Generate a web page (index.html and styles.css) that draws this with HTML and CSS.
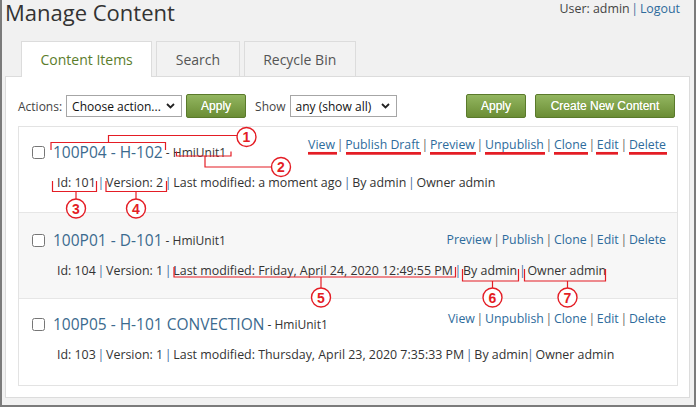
FILE: index.html
```html
<!DOCTYPE html>
<html>
<head>
<meta charset="utf-8">
<title>Manage Content</title>
<link rel="stylesheet" href="styles.css">
</head>
<body>
<header class="top">
  <h1 class="page-title">Manage Content</h1>
  <div class="user">User: admin <span class="bar">|</span> <a href="#" class="link">Logout</a></div>
</header>
<main class="main">
  <nav class="tabs">
    <a class="tab tab-active">Content Items</a>
    <a class="tab">Search</a>
    <a class="tab">Recycle Bin</a>
  </nav>
  <section class="panel">
    <div class="toolbar">
      <div class="toolbar-group">
        <span class="label">Actions:</span>
        <div class="select select-actions"><span>Choose action...</span><svg class="chev" width="9" height="6" viewBox="0 0 9 6"><path d="M1 1 L4.5 4.5 L8 1" fill="none" stroke="#222" stroke-width="1.8"/></svg></div>
        <button class="btn btn-apply">Apply</button>
        <span class="label label-show">Show</span>
        <div class="select select-show"><span>any (show all)</span><svg class="chev" width="9" height="6" viewBox="0 0 9 6"><path d="M1 1 L4.5 4.5 L8 1" fill="none" stroke="#222" stroke-width="1.8"/></svg></div>
      </div>
      <div class="toolbar-group toolbar-right">
        <button class="btn btn-apply">Apply</button>
        <button class="btn btn-create">Create New Content</button>
      </div>
    </div>
    <ul class="items">
      <li class="item">
        <div class="item-head">
          <input type="checkbox" class="check">
          <span class="title">100P04 - H-102</span><span class="unit"> - HmiUnit1</span>
          <div class="actions actions-up-lg">
            <a class="link">View</a> <span class="sep">|</span> <a class="link">Publish Draft</a> <span class="sep">|</span> <a class="link">Preview</a> <span class="sep">|</span> <a class="link">Unpublish</a> <span class="sep">|</span> <a class="link">Clone</a> <span class="sep">|</span> <a class="link">Edit</a> <span class="sep">|</span> <a class="link">Delete</a>
          </div>
        </div>
        <div class="meta">Id: 101 <span class="bar">|</span> Version: 2 <span class="bar">|</span> Last modified: a moment ago <span class="bar">|</span> By admin <span class="bar">|</span> Owner admin</div>
      </li>
      <li class="item item-alt">
        <div class="item-head">
          <input type="checkbox" class="check">
          <span class="title">100P01 - D-101</span><span class="unit"> - HmiUnit1</span>
          <div class="actions">
            <a class="link">Preview</a> <span class="sep">|</span> <a class="link">Publish</a> <span class="sep">|</span> <a class="link">Clone</a> <span class="sep">|</span> <a class="link">Edit</a> <span class="sep">|</span> <a class="link">Delete</a>
          </div>
        </div>
        <div class="meta">Id: 104 <span class="bar">|</span> Version: 1 <span class="bar">|</span> Last modified: Friday, April 24, 2020 12:49:55 PM <span class="bar">|</span> By admin <span class="bar">|</span> Owner admin</div>
      </li>
      <li class="item">
        <div class="item-head">
          <input type="checkbox" class="check">
          <span class="title">100P05 - H-101 CONVECTION</span><span class="unit"> - HmiUnit1</span>
          <div class="actions actions-up-sm">
            <a class="link">View</a> <span class="sep">|</span> <a class="link">Unpublish</a> <span class="sep">|</span> <a class="link">Clone</a> <span class="sep">|</span> <a class="link">Edit</a> <span class="sep">|</span> <a class="link">Delete</a>
          </div>
        </div>
        <div class="meta">Id: 103 <span class="bar">|</span> Version: 1 <span class="bar">|</span> Last modified: Thursday, April 23, 2020 7:35:33 PM <span class="bar">|</span> By admin<span class="bar">|</span> Owner admin</div>
      </li>
    </ul>
  </section>
</main>

<svg class="annotations" width="696" height="407" viewBox="0 0 696 407">
  <g fill="none" stroke="#e41d25" stroke-width="1.2">
    <polyline points="51,150 51,142.5 165.5,142.5 165.5,150"/>
    <polyline points="108.5,142.5 108.5,135.5 237,135.5"/>
    <polyline points="176.5,151.5 176.5,156 231,156 231,151.5"/>
    <polyline points="205,156 205,167 271.5,167"/>
    <polyline points="52.5,181 52.5,191.5 96.5,191.5 96.5,181"/>
    <line x1="76" y1="191.5" x2="76" y2="199"/>
    <polyline points="106,181 106,191.5 166.5,191.5 166.5,181"/>
    <line x1="136" y1="191.5" x2="136" y2="199"/>
    <polyline points="174,267 174,277 455.5,277 455.5,267"/>
    <line x1="321" y1="277" x2="321" y2="288"/>
    <polyline points="462.5,269 462.5,281 518.5,281 518.5,269"/>
    <line x1="492.5" y1="281" x2="492.5" y2="288"/>
    <polyline points="524.5,269 524.5,281 605.5,281 605.5,269"/>
    <line x1="567.5" y1="281" x2="567.5" y2="288"/>
  </g>
  <g stroke="#e41d25" stroke-width="2.7">
    <line x1="308" y1="153.3" x2="337" y2="153.3"/>
    <line x1="346" y1="153.3" x2="421" y2="153.3"/>
    <line x1="430" y1="153.3" x2="476" y2="153.3"/>
    <line x1="485" y1="153.3" x2="545" y2="153.3"/>
    <line x1="554" y1="153.3" x2="588" y2="153.3"/>
    <line x1="596" y1="153.3" x2="618" y2="153.3"/>
    <line x1="629" y1="153.3" x2="667" y2="153.3"/>
  </g>
  <g fill="#fff" stroke="#e41d25" stroke-width="1.4">
    <circle cx="246.5" cy="137" r="9.5"/>
    <circle cx="281" cy="167" r="9.5"/>
    <circle cx="76" cy="208.5" r="9.5"/>
    <circle cx="136" cy="208.5" r="9.5"/>
    <circle cx="321" cy="297.5" r="9.5"/>
    <circle cx="492.5" cy="297.5" r="9.5"/>
    <circle cx="567.5" cy="297.5" r="9.5"/>
  </g>
  <g class="anno-num" fill="#e41d25" text-anchor="middle">
    <text x="246.5" y="142">1</text>
    <text x="281" y="172">2</text>
    <text x="76" y="213.5">3</text>
    <text x="136" y="213.5">4</text>
    <text x="321" y="302.5">5</text>
    <text x="492.5" y="302.5">6</text>
    <text x="567.5" y="302.5">7</text>
  </g>
</svg>
</body>
</html>
```
FILE: styles.css
```css
* { box-sizing: border-box; }

body {
  margin: 0;
  height: 407px;
  overflow: hidden;
  border: 2px solid #7b7b7b;
  border-top-width: 0;
  background: #f1f1f1;
  font-family: "Open Sans", "Noto Sans", sans-serif;
  font-size: 12px;
  color: #333;
}

a { text-decoration: none; cursor: pointer; }

.link { color: #2e6b9c; }

.bar {
  margin: 0 -1.5px;
  color: #3f6fa0;
}

.top {
  display: flex;
  justify-content: space-between;
  align-items: flex-start;
  height: 41px;
  padding: 0 14px 0 3px;
}

.page-title {
  margin: 0;
  font-size: 22px;
  font-weight: normal;
  line-height: 24px;
  color: #333;
}

.user {
  margin-top: 1px;
  font-size: 12.4px;
  line-height: 16px;
  color: #444;
}

.main {
  padding: 0 4px 0 3px;
}

.tabs {
  display: flex;
  align-items: flex-end;
  gap: 4px;
  padding-left: 16px;
}

.tab {
  display: flex;
  align-items: center;
  height: 35px;
  padding: 0 18.5px;
  border: 1px solid #dcdcdc;
  border-bottom: 0;
  background: #f2f2f2;
  font-size: 14px;
  color: #555;
}

.tab-active {
  position: relative;
  z-index: 1;
  height: 36px;
  margin-bottom: -1px;
  background: #fff;
  color: #5b7d2c;
}

.panel {
  height: 322px;
  border: 1px solid #dcdcdc;
  background: #fff;
  padding: 17px 11px 11px 12px;
}

.toolbar {
  display: flex;
  justify-content: space-between;
  align-items: center;
  height: 24px;
  margin-right: 3px;
}

.toolbar-group {
  display: flex;
  align-items: center;
  gap: 4px;
}

.toolbar-right { gap: 9px; }

.label { color: #444; font-size: 12px; }

.label-show { margin-left: 5px; }

.select {
  display: flex;
  align-items: center;
  justify-content: space-between;
  height: 22px;
  padding: 0 6px 0 5px;
  border: 1px solid #a6a6a6;
  background: #fff;
  color: #111;
  font-size: 12px;
}

.select-actions { width: 116px; }
.select-show { width: 107px; }

.chev { display: block; }

.btn {
  height: 24px;
  border: 1px solid #5a7a2b;
  border-radius: 2px;
  background: linear-gradient(#93b660, #6b8d35);
  color: #fff;
  font-family: "Liberation Sans", Arial, sans-serif;
  font-size: 12px;
  padding: 0;
  text-shadow: 0 0 0.6px rgba(255,255,255,0.8);
}

.btn-apply { width: 60px; }
.btn-create { width: 140px; }

.items {
  list-style: none;
  margin: 8px 0 0;
  padding: 0;
  border: 1px solid #e3e3e3;
}

.item {
  height: 86px;
  padding: 14px 11px 0 13px;
  border-bottom: 1px solid #e6e6e6;
}

.item:last-child { border-bottom: 0; }

.item-alt {
  background: #f7f7f7;
  padding-top: 16px;
}

.item-head {
  display: flex;
  align-items: center;
  height: 22px;
}

.check {
  width: 13px;
  height: 13px;
  margin: 0 8px 0 0;
}

.title {
  font-size: 15.5px;
  line-height: 22px;
  color: #3b6a8e;
}

.unit {
  font-size: 12px;
  color: #333;
  white-space: pre;
}

.actions {
  margin-left: auto;
  font-size: 12.3px;
  line-height: 18px;
}

.actions-up-lg { margin-bottom: 14px; }
.actions-up-sm { margin-bottom: 10px; }

.sep {
  margin: 0 -1.5px;
  color: #666;
}

.meta {
  margin-top: 11px;
  padding-left: 25px;
  font-size: 12.4px;
  line-height: 18px;
  color: #333;
}

.annotations {
  position: absolute;
  top: 0;
  left: 0;
  pointer-events: none;
}

.anno-num {
  font-family: "Liberation Sans", Arial, sans-serif;
  font-weight: bold;
  font-size: 14px;
}
```
